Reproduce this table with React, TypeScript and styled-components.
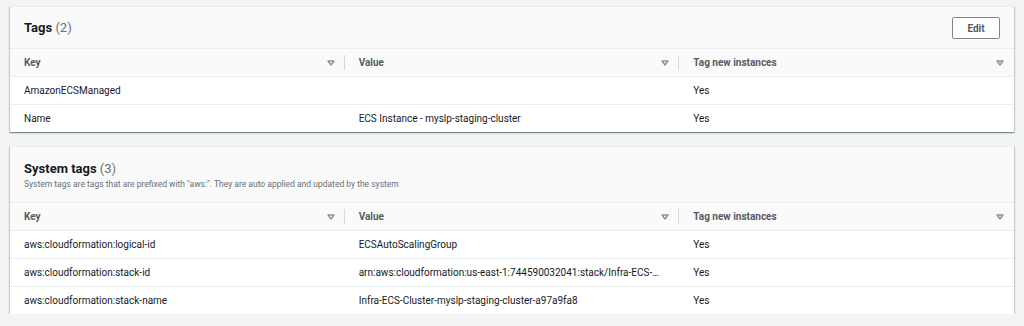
import React from "react";
import styled, { createGlobalStyle } from "styled-components";

const GlobalStyle = createGlobalStyle`
  html, body {
    margin: 0;
    padding: 0;
    background: #f2f3f3;
  }
  body {
    font-family: Roboto, "Liberation Sans", Arial, sans-serif;
    -webkit-font-smoothing: antialiased;
  }
`;

const Page = styled.div`
  display: flex;
  flex-direction: column;
  gap: 14px;
  padding: 6px 10px 0 10px;
  width: 1004px;
`;

const Card = styled.section`
  background: #ffffff;
  box-shadow: 0 1px 1px 0 rgba(0, 28, 36, 0.3),
    1px 1px 1px 0 rgba(0, 28, 36, 0.15),
    -1px 1px 1px 0 rgba(0, 28, 36, 0.15);
  border-top: 1px solid #eaeded;
`;

const CardHeader = styled.div<{ $compact?: boolean }>`
  display: flex;
  align-items: ${(p) => (p.$compact ? "center" : "flex-start")};
  justify-content: space-between;
  background: #fafafa;
  border-bottom: 1px solid #eaeded;
  padding: ${(p) => (p.$compact ? "10px 14px 9px 14px" : "14px 14px 12px 14px")};
`;

const TitleBlock = styled.div`
  display: flex;
  flex-direction: column;
  gap: 1px;
`;

const Title = styled.h2`
  margin: 0;
  font-size: 13px;
  line-height: 16px;
  font-weight: 700;
  color: #16191f;
`;

const Count = styled.span`
  font-weight: 400;
  color: #687078;
`;

const Description = styled.p`
  margin: 0;
  font-size: 8.5px;
  line-height: 12px;
  color: #687078;
`;

const Button = styled.button`
  width: 48px;
  height: 22px;
  padding: 0;
  border: 1px solid #7d8690;
  border-radius: 2px;
  background: #ffffff;
  color: #545b64;
  font-family: inherit;
  font-size: 10px;
  font-weight: 700;
  cursor: pointer;
`;

const Table = styled.div`
  display: grid;
  grid-template-columns: repeat(3, 1fr);
`;

const HeadCell = styled.div`
  display: flex;
  align-items: center;
  height: 27px;
  padding-left: 14px;
  background: #fafafa;
  border-bottom: 1px solid #eaeded;
  color: #545b64;
  font-size: 10px;
  font-weight: 700;
`;

const HeadLabel = styled.span`
  flex: 1;
`;

const SortIcon = styled.svg`
  width: 8px;
  height: 6px;
  margin-right: 9px;
  flex: none;
`;

const Divider = styled.span<{ $hidden?: boolean }>`
  width: 1px;
  height: 15px;
  background: ${(p) => (p.$hidden ? "transparent" : "#d5dbdb")};
  flex: none;
`;

const Cell = styled.div<{ $last?: boolean }>`
  display: flex;
  align-items: center;
  height: 27px;
  padding-left: 14px;
  border-bottom: ${(p) => (p.$last ? "none" : "1px solid #eaeded")};
  color: #16191f;
  font-size: 10px;
  white-space: nowrap;
  overflow: hidden;
`;

const Sort = () => (
  <SortIcon viewBox="0 0 8 6">
    <polygon
      points="1,1 7,1 4,5"
      fill="none"
      stroke="#879596"
      strokeWidth="1.4"
      strokeLinejoin="round"
    />
  </SortIcon>
);

const columns = ["Key", "Value", "Tag new instances"];

type Row = [string, string, string];

const TagTable = ({ rows }: { rows: Row[] }) => (
  <Table>
    {columns.map((c, i) => (
      <HeadCell key={c}>
        <HeadLabel>{c}</HeadLabel>
        <Sort />
        <Divider $hidden={i === columns.length - 1} />
      </HeadCell>
    ))}
    {rows.map((r, ri) =>
      r.map((v, ci) => (
        <Cell key={`${ri}-${ci}`} $last={ri === rows.length - 1}>
          {v}
        </Cell>
      ))
    )}
  </Table>
);

const tags: Row[] = [
  ["AmazonECSManaged", "", "Yes"],
  ["Name", "ECS Instance - myslp-staging-cluster", "Yes"],
];

const systemTags: Row[] = [
  ["aws:cloudformation:logical-id", "ECSAutoScalingGroup", "Yes"],
  [
    "aws:cloudformation:stack-id",
    "arn:aws:cloudformation:us-east-1:744590032041:stack/Infra-ECS-…",
    "Yes",
  ],
  [
    "aws:cloudformation:stack-name",
    "Infra-ECS-Cluster-myslp-staging-cluster-a97a9fa8",
    "Yes",
  ],
];

export default function App() {
  return (
    <>
      <GlobalStyle />
      <Page>
        <Card>
          <CardHeader $compact>
            <Title>
              Tags <Count>(2)</Count>
            </Title>
            <Button>Edit</Button>
          </CardHeader>
          <TagTable rows={tags} />
        </Card>
        <Card>
          <CardHeader>
            <TitleBlock>
              <Title>
                System tags <Count>(3)</Count>
              </Title>
              <Description>
                System tags are tags that are prefixed with "aws:". They are
                auto applied and updated by the system
              </Description>
            </TitleBlock>
          </CardHeader>
          <TagTable rows={systemTags} />
        </Card>
      </Page>
    </>
  );
}
